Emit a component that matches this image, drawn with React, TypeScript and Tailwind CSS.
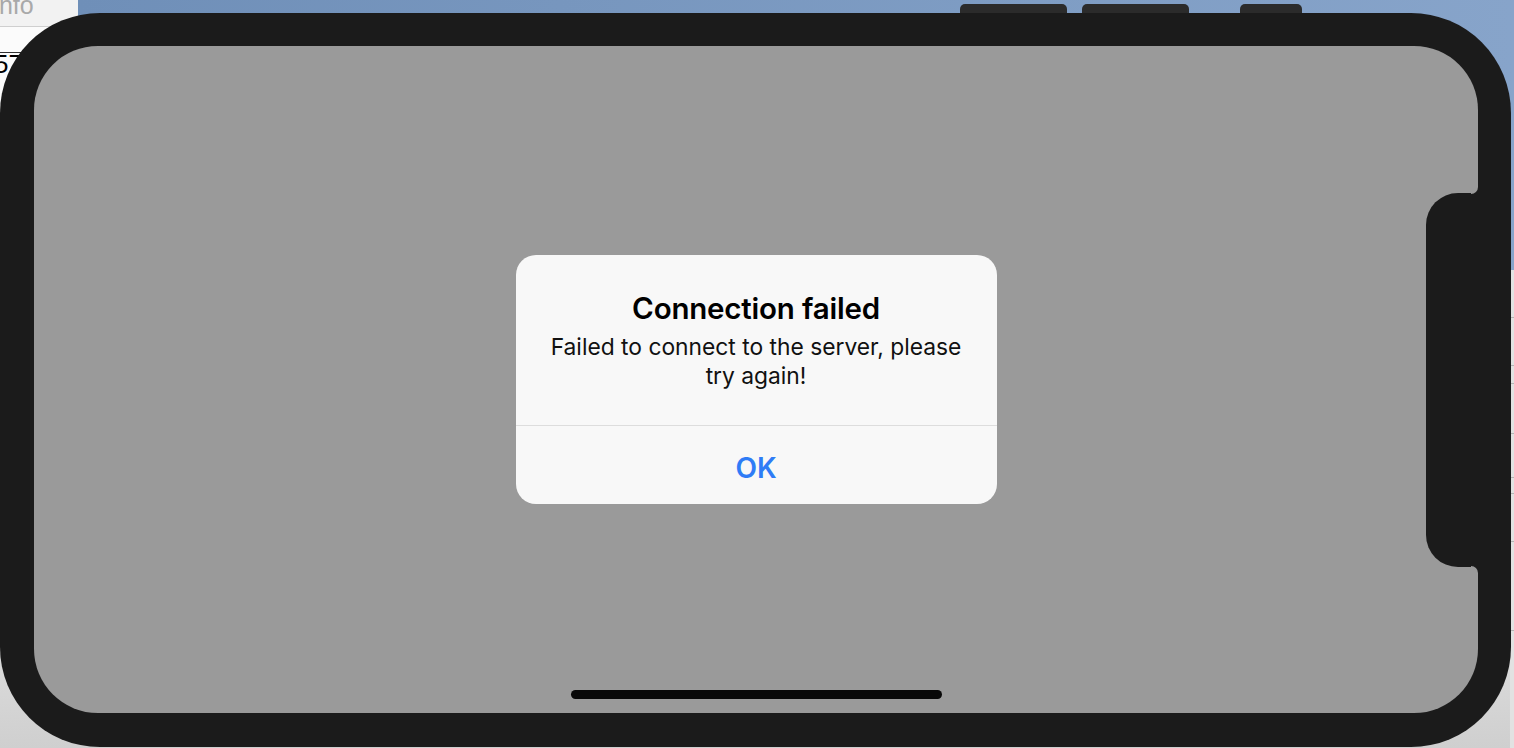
import React from "react";

export default function App() {
  return (
    <div className="relative w-[1514px] h-[748px] overflow-hidden bg-[#dedede] pt-[13px]" style={{ fontFamily: "Inter, 'Noto Sans', sans-serif" }}>
      {/* desktop behind the device */}
      <div className="absolute left-[78px] top-0 right-0 h-[270px] bg-gradient-to-r from-[#6f8fb8] to-[#87a4ca]" />
      <div className="absolute left-0 top-0 w-[78px] h-[140px] bg-[#fbfbfb]">
        <div className="relative h-[27px] bg-[#f2f2f2] border-b border-[#cfcfcf] overflow-hidden">
          <span className="absolute left-[-8px] top-[-7px] text-[25px] leading-none text-[#a9a9a9]" style={{ fontFamily: "'Liberation Sans', Arial, sans-serif" }}>Info</span>
        </div>
        <div className="relative h-[100px] overflow-hidden">
          <div className="absolute left-0 top-[25px] w-[22px] h-px bg-[#333]" />
          <span className="absolute left-[-6px] top-[24px] text-[26px] leading-none text-black" style={{ fontFamily: "'Liberation Sans', Arial, sans-serif" }}>57</span>
        </div>
      </div>
      <div className="absolute left-0 right-0 bottom-0 h-[160px] bg-gradient-to-b from-[#e4e4e4] to-[#cfcfcf]" />
      <div className="absolute right-0 top-[270px] w-[4px] h-[478px] bg-[#e2e2e2] flex flex-col">
        <div className="h-[47px]" /><div className="h-px bg-[#b5b5b5]" />
        <div className="h-[47px]" /><div className="h-px bg-[#b5b5b5]" />
        <div className="h-[17px]" /><div className="h-px bg-[#b5b5b5]" />
        <div className="h-[49px]" /><div className="h-px bg-[#b5b5b5]" />
        <div className="h-[43px]" /><div className="h-px bg-[#b5b5b5]" />
        <div className="h-[15px]" /><div className="h-px bg-[#b5b5b5]" />
        <div className="h-[47px]" /><div className="h-px bg-[#b5b5b5]" />
        <div className="h-[88px]" /><div className="h-px bg-[#b5b5b5]" />
      </div>
      {/* hardware buttons */}
      <div className="absolute left-[960px] top-[4px] flex">
        <div className="w-[107px] h-[14px] rounded-t-[5px] bg-[#2b2b2b]" />
        <div className="ml-[15px] w-[107px] h-[14px] rounded-t-[5px] bg-[#2b2b2b]" />
        <div className="ml-[51px] w-[62px] h-[14px] rounded-t-[5px] bg-[#2b2b2b]" />
      </div>

      {/* device */}
      <div className="relative w-[1511px] h-[734px] rounded-[100px] bg-[#1b1b1b] pt-[33px] pl-[34px]">
        <div className="relative w-[1444px] h-[667px] rounded-[64px] bg-[#9a9a9a] overflow-hidden flex items-center justify-center">
          {/* sensor housing */}
          <div className="absolute right-0 top-[147px] w-[52px] h-[374px] rounded-l-[32px] bg-[#1b1b1b]" />
          <div className="absolute right-0 top-[141px] w-[7px] h-[7px] bg-[#1b1b1b]">
            <div className="w-full h-full rounded-br-[7px] bg-[#9a9a9a]" />
          </div>
          <div className="absolute right-0 top-[520px] w-[7px] h-[7px] bg-[#1b1b1b]">
            <div className="w-full h-full rounded-tr-[7px] bg-[#9a9a9a]" />
          </div>

          {/* alert */}
          <div className="w-[481px] h-[249px] rounded-[20px] bg-[#f8f8f8] flex flex-col">
            <div className="flex-1 flex flex-col items-center px-[32px] pt-[36px]">
              <div className="text-[29.5px] leading-[34px] font-semibold text-black tracking-[-0.2px]">Connection failed</div>
              <div className="mt-[7px] text-[22.8px] leading-[29px] text-[#111] text-center">Failed to connect to the server, please try again!</div>
            </div>
            <div className="h-px bg-[#dddddd]" />
            <div className="h-[78px] pt-[5px] flex items-center justify-center text-[28px] font-semibold text-[#2f7cf6]">OK</div>
          </div>

          {/* home indicator */}
          <div className="absolute left-[537px] bottom-[14px] w-[371px] h-[9px] rounded-full bg-[#080808]" />
        </div>
      </div>
    </div>
  );
}
